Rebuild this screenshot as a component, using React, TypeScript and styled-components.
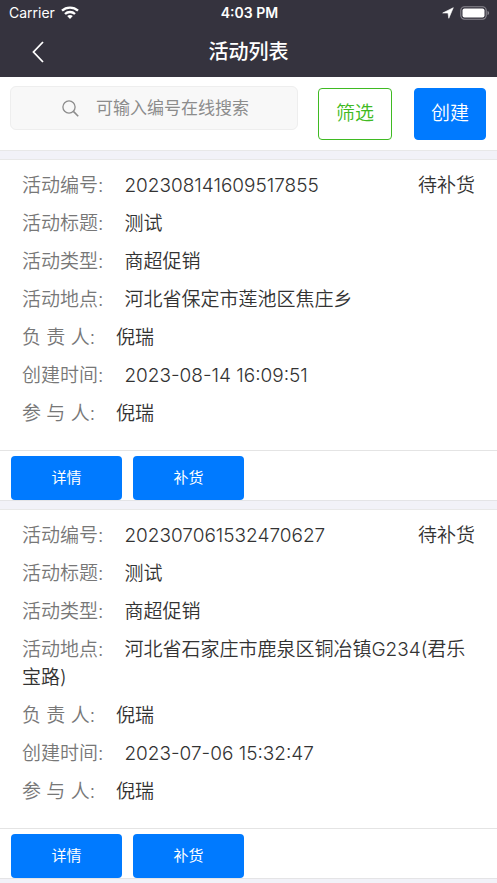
import React from "react";
import styled, { createGlobalStyle, css } from "styled-components";

const GlobalStyle = createGlobalStyle`
  *, *::before, *::after { box-sizing: border-box; }
  body {
    margin: 0;
    background: #f2f2f8;
    color: #333333;
    font-family: Inter, "Noto Sans CJK SC", sans-serif;
  }
  button, input { font: inherit; }
`;

const Page = styled.div`
  display: flex;
  flex-direction: column;
  gap: 8px;
`;

const Top = styled.div`
  background: #ffffff;
  border-bottom: 1px solid #e8e8e8;
`;

const Header = styled.header`
  background: #35333e;
  color: #ffffff;
`;

const StatusBar = styled.div`
  display: grid;
  grid-template-columns: 1fr auto 1fr;
  align-items: center;
  height: 26px;
  padding: 0 7px 0 9px;
  font-size: 14px;
  line-height: 26px;
`;

const StatusGroup = styled.div<{ $end?: boolean }>`
  display: flex;
  align-items: center;
  gap: 6px;
  justify-content: ${(p) => (p.$end ? "flex-end" : "flex-start")};
`;

const Clock = styled.time`
  font-size: 14px;
  font-weight: 600;
`;

const TitleBar = styled.div`
  display: grid;
  grid-template-columns: 48px 1fr 48px;
  align-items: center;
  height: 51px;
  padding: 0 14px;
`;

const BackButton = styled.button`
  display: flex;
  justify-content: center;
  padding: 0;
  border: 0;
  background: none;
  color: #ffffff;
`;

const Title = styled.h1`
  margin: 0;
  text-align: center;
  font-size: 20px;
  line-height: 28px;
  font-weight: 500;
`;

const Toolbar = styled.form`
  display: flex;
  align-items: flex-start;
  padding: 9px 11px 10px 10px;
`;

const SearchBox = styled.label`
  display: flex;
  flex: 1;
  min-width: 0;
  align-items: center;
  gap: 17px;
  height: 44px;
  margin-right: 20px;
  padding-left: 51px;
  border: 1px solid #eeeeee;
  border-radius: 6px;
  background: #f8f8f8;
  color: #8c8c8c;
  svg { flex: none; }
`;

const SearchInput = styled.input`
  flex: 1;
  min-width: 0;
  padding: 0;
  border: 0;
  outline: 0;
  background: transparent;
  color: #333333;
  font-size: 17px;
  line-height: 26px;
  &::placeholder { color: #8c8c8c; opacity: 1; }
`;

const ToolButton = styled.button<{ $outline?: boolean }>`
  flex: none;
  width: ${(p) => (p.$outline ? 74 : 72)}px;
  height: 52px;
  margin: 2px 0 0 ${(p) => (p.$outline ? 0 : 22)}px;
  padding: 0;
  border: 1px solid ${(p) => (p.$outline ? "#3fba22" : "#007aff")};
  border-radius: 4px;
  background: ${(p) => (p.$outline ? "#ffffff" : "#007aff")};
  color: ${(p) => (p.$outline ? "#3fba22" : "#ffffff")};
  font-size: 19px;
  font-weight: 350;
  line-height: 28px;
`;

const Card = styled.article`
  background: #ffffff;
  border-top: 1px solid #e8e8e8;
  border-bottom: 1px solid #e4e4e6;
`;

const Fields = styled.dl`
  display: flex;
  flex-direction: column;
  gap: 10px;
  margin: 0;
  padding: 12px 22px 22px;
  font-size: 19px;
  font-weight: 350;
  line-height: 28px;
`;

const Row = styled.div`
  min-height: 28px;
`;

const Label = styled.dt`
  display: inline;
  margin-right: 21px;
  color: #777777;
`;

const Value = styled.dd`
  display: inline;
  margin: 0;
`;

const State = styled.dd`
  float: right;
  margin: 0;
`;

const Actions = styled.div`
  display: flex;
  gap: 11px;
  padding: 5px 11px 0;
  border-top: 1px solid #e4e4e4;
`;

const ActionButton = styled.button`
  width: 111px;
  height: 44px;
  padding: 0;
  border: 0;
  border-radius: 4px;
  background: #007aff;
  color: #ffffff;
  font-size: 15px;
  line-height: 22px;
`;

interface Activity {
  id: string;
  title: string;
  type: string;
  place: string;
  owner: string;
  created: string;
  members: string;
  state: string;
}

const activities: Activity[] = [
  {
    id: "202308141609517855",
    title: "测试",
    type: "商超促销",
    place: "河北省保定市莲池区焦庄乡",
    owner: "倪瑞",
    created: "2023-08-14 16:09:51",
    members: "倪瑞",
    state: "待补货",
  },
  {
    id: "202307061532470627",
    title: "测试",
    type: "商超促销",
    place: "河北省石家庄市鹿泉区铜冶镇G234(君乐宝路)",
    owner: "倪瑞",
    created: "2023-07-06 15:32:47",
    members: "倪瑞",
    state: "待补货",
  },
];

const WifiIcon = () => (
  <svg width="18" height="14" viewBox="0 0 18 14" fill="none" stroke="#fff" strokeWidth="2.3" aria-hidden="true">
    <path d="M1 4.7C5.4.5 12.6.5 17 4.7" />
    <path d="M4 8C6.8 5.3 11.2 5.3 14 8" />
    <path d="M9 13L6.2 10.1C7.8 8.7 10.2 8.7 11.8 10.1Z" fill="#fff" stroke="none" />
  </svg>
);

const LocationIcon = () => (
  <svg width="12" height="12" viewBox="0 0 12 12" aria-hidden="true">
    <path d="M11.3.7L6.8 11.3L6 6H.7Z" fill="#fff" stroke="#fff" strokeWidth=".6" strokeLinejoin="round" />
  </svg>
);

const BatteryIcon = () => (
  <svg width="30" height="14" viewBox="0 0 30 14" aria-hidden="true">
    <rect x=".8" y=".8" width="25.4" height="12.4" rx="3.6" fill="none" stroke="#8b8991" strokeWidth="1.1" />
    <rect x="2.5" y="2.5" width="22" height="9" rx="2" fill="#fff" />
    <path d="M27.5 5C29.6 5.4 29.6 8.6 27.5 9Z" fill="#8b8991" />
  </svg>
);

const BackIcon = () => (
  <svg width="12" height="22" viewBox="0 0 12 22" fill="none" stroke="currentColor" strokeWidth="1.8" aria-hidden="true">
    <path d="M11 1L1.5 11L11 21" />
  </svg>
);

const SearchIcon = () => (
  <svg width="17" height="17" viewBox="0 0 17 17" fill="none" stroke="currentColor" strokeWidth="1.3" aria-hidden="true">
    <circle cx="7" cy="7" r="6.1" />
    <path d="M11.4 11.4L16.2 16.2" strokeWidth="1.6" />
  </svg>
);

interface FieldProps {
  label: string;
  value: string;
  state?: string;
}

const Field = ({ label, value, state }: FieldProps) => (
  <Row>
    <Label>{label}:</Label>
    <Value>{value}</Value>
    {state && <State>{state}</State>}
  </Row>
);

const ActivityCard = ({ item }: { item: Activity }) => (
  <Card>
    <Fields>
      <Field label="活动编号" value={item.id} state={item.state} />
      <Field label="活动标题" value={item.title} />
      <Field label="活动类型" value={item.type} />
      <Field label="活动地点" value={item.place} />
      <Field label="负 责 人" value={item.owner} />
      <Field label="创建时间" value={item.created} />
      <Field label="参 与 人" value={item.members} />
    </Fields>
    <Actions>
      <ActionButton type="button">详情</ActionButton>
      <ActionButton type="button">补货</ActionButton>
    </Actions>
  </Card>
);

export default function App() {
  return (
    <>
      <GlobalStyle />
      <Page>
        <Top>
          <Header>
            <StatusBar>
              <StatusGroup>
                <span>Carrier</span>
                <WifiIcon />
              </StatusGroup>
              <Clock>4:03 PM</Clock>
              <StatusGroup $end>
                <LocationIcon />
                <BatteryIcon />
              </StatusGroup>
            </StatusBar>
            <TitleBar>
              <BackButton type="button" aria-label="返回">
                <BackIcon />
              </BackButton>
              <Title>活动列表</Title>
            </TitleBar>
          </Header>
          <Toolbar onSubmit={(e) => e.preventDefault()}>
            <SearchBox>
              <SearchIcon />
              <SearchInput type="text" aria-label="搜索" placeholder="可输入编号在线搜索" />
            </SearchBox>
            <ToolButton type="button" $outline>筛选</ToolButton>
            <ToolButton type="button">创建</ToolButton>
          </Toolbar>
        </Top>
        {activities.map((item) => (
          <ActivityCard key={item.id} item={item} />
        ))}
      </Page>
    </>
  );
}
